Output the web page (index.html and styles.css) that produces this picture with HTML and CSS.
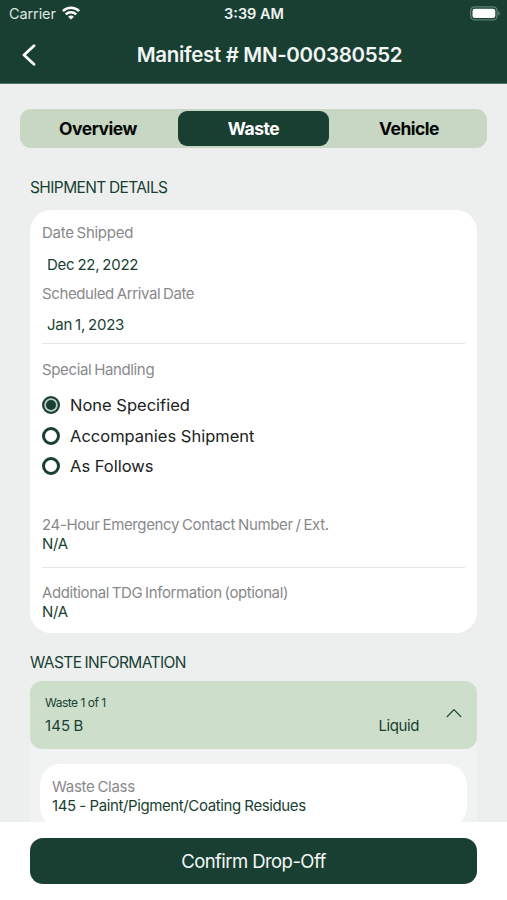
FILE: index.html
```html
<!DOCTYPE html>
<html lang="en">
<head>
<meta charset="utf-8">
<title>Manifest</title>
<link rel="stylesheet" href="styles.css">
</head>
<body>
<div class="screen">
  <header class="header">
    <div class="status">
      <div class="carrier"><span>Carrier</span>
        <svg class="wifi" width="18" height="14" viewBox="0 0 18 14" fill="none" stroke="#fff" stroke-width="2.5"><path d="M.9 5.1C5.4.6 12.6.6 17.1 5.1"/><path d="M3.8 8.3c2.900-2.800 7.500-2.800 10.400 0"/><path d="M9 13.600 6.100 10.700c1.600-1.500 4.200-1.500 5.800 0z" fill="#fff" stroke="none"/></svg>
      </div>
      <div class="time">3:39 AM</div>
      <svg class="battery" width="31" height="15" viewBox="0 0 31 15"><rect x=".7" y=".9" width="26.400" height="13" rx="4" fill="none" stroke="#5f8174" stroke-width="1.300"/><rect x="2.500" y="2.700" width="22.800" height="9.400" rx="2.300" fill="#fff"/><path d="M28.300 5.200c2 .7 2 3.700 0 4.400z" fill="#5f8174"/></svg>
    </div>
    <div class="nav">
      <svg class="back" width="14" height="22" viewBox="0 0 14 22" fill="none" stroke="#fff" stroke-width="2.800" stroke-linecap="round" stroke-linejoin="round"><path d="M12 1.800 2 11l10 9.200"/></svg>
      <h1 class="title">Manifest # MN-000380552</h1>
    </div>
  </header>
  <main class="content">
    <nav class="tabs">
      <div class="tab first">Overview</div>
      <div class="tab active">Waste</div>
      <div class="tab last">Vehicle</div>
    </nav>
    <h2 class="section">SHIPMENT DETAILS</h2>
    <section class="card">
      <div class="label date-label">Date Shipped</div>
      <div class="value date">Dec 22, 2022</div>
      <div class="label arrival">Scheduled Arrival Date</div>
      <div class="value date arrival-date">Jan 1, 2023</div>
      <hr>
      <div class="label handling">Special Handling</div>
      <div class="options">
        <div class="option"><span class="radio checked"></span><span>None Specified</span></div>
        <div class="option"><span class="radio"></span><span>Accompanies Shipment</span></div>
        <div class="option"><span class="radio"></span><span>As Follows</span></div>
      </div>
      <div class="label phone">24-Hour Emergency Contact Number / Ext.</div>
      <div class="value na">N/A</div>
      <hr class="second">
      <div class="label tdg">Additional TDG Information (optional)</div>
      <div class="value na">N/A</div>
    </section>
    <h2 class="section waste-title">WASTE INFORMATION</h2>
    <section class="waste">
      <div class="waste-head">
        <div class="waste-id"><div class="count">Waste 1 of 1</div><div class="value code">145 B</div></div>
        <div class="value state">Liquid</div>
        <svg class="chevron" width="16" height="10" viewBox="0 0 16 10" fill="none" stroke="#1b4336" stroke-width="1.300" stroke-linecap="round" stroke-linejoin="round"><path d="M1.200 8.600 8 1.600l6.800 7"/></svg>
      </div>
      <div class="waste-card">
        <div class="label class-label">Waste Class</div>
        <div class="value residue">145 - Paint/Pigment/Coating Residues</div>
      </div>
    </section>
  </main>
  <footer class="footer"><button class="confirm">Confirm Drop-Off</button></footer>
</div>
</body>
</html>
```
FILE: styles.css
```css
* { box-sizing: border-box; }
body { margin: 0; font-family: Inter, "Liberation Sans", sans-serif; color: #193f33; }
h1, h2 { margin: 0; font-weight: 400; }
.screen { width: 507px; height: 900px; display: flex; flex-direction: column; overflow: hidden; background: #edefee; white-space: nowrap; }
.header { height: 84px; flex: none; background: #193f33; color: #fff; border-bottom: 1px solid #55736a; }
.status { height: 27px; display: grid; grid-template-columns: 1fr auto 1fr; align-items: center; padding: 0 6px 0 9px; }
.carrier { display: flex; align-items: center; gap: 6px; font-size: 14.5px; letter-spacing: -.1px; color: #dce5e1; }
.wifi { margin-top: -2px; }
.time { margin-right: 2px; font-size: 14.5px; font-weight: 600; color: #eef3f1; }
.battery { justify-self: end; margin-top: -1px; }
.nav { height: 55px; display: grid; grid-template-columns: 40px 1fr; align-items: center; padding: 0 30px 0 22px; }
.title { font-size: 20.5px; font-weight: 600; letter-spacing: -.33px; text-align: center; color: #f1f5f3; }
.content { flex: 1; min-height: 0; overflow: hidden; padding: 25px 30px 0; }
.tabs { height: 39px; margin: 0 -10px; padding: 2px; border-radius: 11px; background: #c8d6c4; display: grid; grid-template-columns: 156px 151px 1fr; }
.tab { display: flex; align-items: center; justify-content: center; border-radius: 9px; color: #050805; font-size: 17.5px; font-weight: 700; letter-spacing: -.5px; }
.tab.active { background: #193f33; color: #fff; }
.tab.first { padding-right: 4px; }
.tab.last { padding-left: 4px; }
.section { font-size: 15.5px; line-height: 20px; letter-spacing: -.6px; word-spacing: -.6px; margin-top: 30px; }
.card { margin-top: 12px; height: 423px; padding: 13px 12px 0; border-radius: 21px; background: #fff; }
.label { font-size: 15px; line-height: 20px; color: #88898b; letter-spacing: -.28px; word-spacing: -1px; }
.value { font-size: 15px; line-height: 20px; letter-spacing: -.24px; word-spacing: -1px; }
.date { margin: 12px 0 0 5px; }
.arrival { margin-top: 9px; }
.arrival-date { margin-top: 11px; }
hr { border: 0; height: 1px; margin: 8px 0 0; background: #e4e6e6; }
.handling { margin-top: 16px; letter-spacing: -.36px; }
.options { margin-top: 10px; }
.option { height: 30.600px; display: flex; align-items: center; gap: 10px; color: #202322; font-size: 16.500px; }
.radio { width: 18px; height: 18px; border: 3px solid #193f33; border-radius: 50%; background: #fff; }
.radio.checked { border-width: 2px; background: #193f33; box-shadow: inset 0 0 0 2px #b9c9c2; }
.phone { margin-top: 33.200px; letter-spacing: -.36px; }
.arrival, .tdg { letter-spacing: -.39px; }
.na { margin-top: -1px; letter-spacing: -.3px; }
.second { margin-top: 13px; }
.tdg { margin-top: 15px; }
.waste-title { margin-top: 20px; }
.waste { margin-top: 8px; height: 200px; background: #f1f3f2; border-radius: 12px; }
.waste-head { height: 68px; border-radius: 12px; background: #cddfcb; display: flex; padding: 0 15px; }
.waste-id { flex: 1; padding-top: 14px; }
.count { font-size: 12px; line-height: 16px; letter-spacing: -.5px; }
.code { margin-top: 5px; letter-spacing: .1px; }
.state { margin: 35px 27px 0 0; letter-spacing: -.4px; }
.chevron { margin-top: 27px; }
.waste-card { height: 64px; margin: 15px 10px 0; padding: 13px 12px 0; background: #fff; border-radius: 21px; }
.residue { margin-top: -1px; letter-spacing: -.39px; word-spacing: -.2px; }
.footer { height: 78px; flex: none; padding: 16px 30px; background: #fff; }
.confirm { display: block; width: 100%; height: 46px; border: 0; border-radius: 13px; background: #193f33; color: #f4f8f6; font-family: inherit; font-size: 18.5px; letter-spacing: -.57px; }
```
